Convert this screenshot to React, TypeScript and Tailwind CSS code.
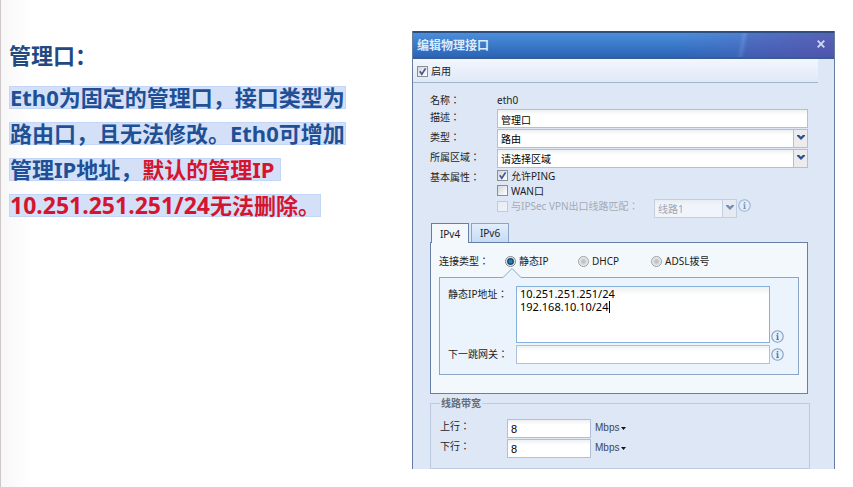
import type { ReactNode } from "react";

const options = { type: ["路由", "透明"], zone: ["请选择区域"], line: ["线路1", "线路2"] };

const fieldStyle =
  "block w-full border border-[#b3bfd6] bg-linear-to-b from-[#eef1f0] via-white via-30% to-white px-[3px] text-black outline-none";

function Chevron() {
  return (
    <svg viewBox="0 0 8 5" className="h-[5px] w-[8px]" fill="#2c4f8f">
      <path d="M0 0h2.2L4 1.8 5.8 0H8v1L4 5 0 1z" />
    </svg>
  );
}

function Info({ dim = false }: { dim?: boolean }) {
  return (
    <svg viewBox="0 0 13 13" className={dim ? "size-[13px] shrink-0 opacity-70" : "size-[13px] shrink-0"}>
      <circle cx="6.5" cy="6.5" r="5.7" fill="#e6f0fa" stroke="#7f9fc6" strokeWidth="1.1" />
      <rect x="5.8" y="3" width="1.5" height="1.5" fill="#4f79b0" />
      <path d="M5.2 5.3h2.1v4h.7v.7H5.2v-.7h.6V6H5.2z" fill="#4f79b0" />
    </svg>
  );
}

function Check({ label, checked, disabled }: { label: string; checked?: boolean; disabled?: boolean }) {
  return (
    <label className={disabled ? "flex items-center gap-[3px] text-[#a3abb8]" : "flex items-center gap-[3px] text-[#1c1c1c]"}>
      <span className="relative block size-[11px] shrink-0">
        <input
          type="checkbox"
          defaultChecked={checked}
          disabled={disabled}
          className="peer block size-[11px] appearance-none border border-[#8b8f94] bg-linear-to-br from-[#d3d6da] to-white disabled:border-[#c3cad4] disabled:from-[#e9edf4] disabled:to-[#eef2f8]"
        />
        <svg viewBox="0 0 11 11" className="pointer-events-none absolute inset-0 hidden size-[11px] peer-checked:block">
          <path d="M2.8 5.2 4.8 8.2 8.6 2.4" fill="none" stroke="#40569c" strokeWidth="1.7" />
        </svg>
      </span>
      {label}
    </label>
  );
}

function Radio({ label, checked }: { label: string; checked?: boolean }) {
  return (
    <label className="flex items-center gap-[3px]">
      <input
        type="radio"
        name="connection"
        defaultChecked={checked}
        className="size-[11px] appearance-none rounded-full border border-[#9b9fa4] bg-radial from-[#bfc2c6] from-20% to-[#f4f5f6] to-75% checked:border-[#7d858e] checked:from-[#1c86b8] checked:via-[#183c5c] checked:via-45% checked:to-[#eef2f5] checked:to-65%"
      />
      {label}
    </label>
  );
}

function Select({ id, items, disabled }: { id: string; items: string[]; disabled?: boolean }) {
  return (
    <div className={disabled ? "relative w-[83px] opacity-60" : "relative flex-1"}>
      <select id={id} disabled={disabled} className={`${fieldStyle} h-[19px] appearance-none pt-[2px] leading-[15px] disabled:text-[#707782]`}>
        {items.map((item) => (
          <option key={item}>{item}</option>
        ))}
      </select>
      <span className="pointer-events-none absolute inset-y-0 right-0 flex w-[15px] items-center justify-center border border-[#b3bfd6] bg-[#ececef] pb-[2px]">
        <Chevron />
      </span>
    </div>
  );
}

function Row({ label, id, children }: { label: string; id?: string; children: ReactNode }) {
  return (
    <div className="flex h-5 items-center">
      <label htmlFor={id} className="w-[67px] shrink-0 pb-[2px]">
        {label}
      </label>
      {children}
    </div>
  );
}

function Rate({ label, id }: { label: string; id: string }) {
  return (
    <div className="flex h-5 items-center">
      <label htmlFor={id} className="w-[67px] pb-1">
        {label}
      </label>
      <div className="w-[84px]">
        <input id={id} defaultValue="8" className={`${fieldStyle} h-[19px] pt-[2px] font-['Liberation_Sans',sans-serif] text-[11px]`} />
      </div>
      <button type="button" className="ml-1 flex items-center gap-[2px] font-['Liberation_Sans',sans-serif] text-[#3c4654]">
        Mbps
        <svg viewBox="0 0 5 3" className="h-[3px] w-[5px]" fill="#111">
          <path d="M0 0h5L2.5 3z" />
        </svg>
      </button>
    </div>
  );
}

function Notes() {
  const line = "h-[23px] border border-[#c3d6f7] bg-[#d3e0f8] leading-[20px] whitespace-pre";
  return (
    <section
      lang="zh-CN"
      className="border-l border-[#cfc8c8] bg-linear-to-r from-[#f7f7f7] to-white to-[30px] pt-[43px] pl-2 font-['Noto_Sans','Noto_Sans_CJK_SC',sans-serif] text-[22px] font-bold text-[#1f5096]"
    >
      <h1 className="leading-[24px] text-[#234a80]">管理口：</h1>
      <div className="mt-[19px] flex flex-col items-start gap-[13px]">
        <p className={line}>Eth0为固定的管理口，接口类型为</p>
        <p className={line}>路由口，且无法修改。Eth0可增加</p>
        <p className={line}>
          管理IP地址，<span className="text-[#d5152f]">默认的管理IP </span>
        </p>
        <p className={`${line} text-[#d5152f]`}>
          <span className="text-[23px]">10.251.251.251/24</span>无法删除。
        </p>
      </div>
    </section>
  );
}

function Dialog() {
  return (
    <section
      lang="zh-TW"
      className="self-start border-x border-[#667c9c] bg-[#dee7f6] font-['Noto_Sans','Noto_Sans_CJK_TC',sans-serif] text-[10px] leading-[14px] text-[#1c1c1c]"
    >
      <header className="flex h-[28px] items-center justify-between border-t-2 border-b-2 border-t-[#2c5180] border-b-[#3a5c92] bg-[linear-gradient(100deg,transparent_62%,#5a62b855_77%,#8c8ed855_78%,#5a55ac77_79%,#5d50a8bb),linear-gradient(#4b8edb,#2a64b6)] pr-[9px] pl-[4px]">
        <h2 className="pt-[2px] text-[12px] font-bold text-[#dcebfb]">编辑物理接口</h2>
        <button type="button" aria-label="关闭" className="pb-[2px]">
          <svg viewBox="0 0 8 8" className="size-[8px]" stroke="#d5d9f2" strokeWidth="1.8">
            <path d="M.7.7 7.3 7.3M7.3.7.7 7.3" />
          </svg>
        </button>
      </header>
      <div className="mr-4 flex h-[24px] items-center border-b border-[#a3b6cd] bg-linear-to-b from-[#f3f6fd] to-[#e0e9f7] pt-[1px] pl-1">
        <Check label="启用" checked />
      </div>

      <form className="pr-[26px] pl-[17px]">
        <div className="flex h-[25px] items-end pb-[1px]">
          <span className="w-[67px]">名称：</span>
          <span>eth0</span>
        </div>
        <Row label="描述：" id="desc">
          <input id="desc" defaultValue="管理口" className={`${fieldStyle} h-[19px] pt-[2px]`} />
        </Row>
        <Row label="类型：" id="type">
          <Select id="type" items={options.type} />
        </Row>
        <Row label="所属区域：" id="zone">
          <Select id="zone" items={options.zone} />
        </Row>
        <div className="flex">
          <span className="w-[67px] shrink-0 pt-[2px]">基本属性：</span>
          <div>
            <div className="flex h-[15px] items-center">
              <Check label="允许PING" checked />
            </div>
            <div className="flex h-[15px] items-center">
              <Check label="WAN口" />
            </div>
            <div className="flex h-[21px] items-start pt-px">
              <div className="w-[157px]">
                <Check label="与IPSec VPN出口线路匹配：" disabled />
              </div>
              <Select id="line" items={options.line} disabled />
              <label htmlFor="line" aria-label="线路" className="ml-[1px]">
                <Info dim />
              </label>
            </div>
          </div>
        </div>

        <div role="tablist" className="mt-[4px] flex gap-[2px] pl-[1px]">
          <button type="button" role="tab" aria-selected="true" className="relative -mb-px h-[20px] w-[38px] border border-b-0 border-[#667fa8] bg-[#f3f8fd]">
            IPv4
          </button>
          <button type="button" role="tab" aria-selected="false" className="h-[19px] w-[38px] border border-b-0 border-[#8aa4cb] bg-linear-to-b from-[#e2eefb] to-[#c6dcf5]">
            IPv6
          </button>
        </div>
        <div role="tabpanel" className="border border-[#667fa8] bg-[#f3f8fd] px-[8px] pb-[18px]">
          <div className="flex h-[34px] items-center pt-[2px]">
            <span className="w-[66px]">连接类型：</span>
            <div className="w-[73px]">
              <Radio label="静态IP" checked />
            </div>
            <div className="w-[73px]">
              <Radio label="DHCP" />
            </div>
            <Radio label="ADSL拨号" />
          </div>
          <div className="relative border border-[#8ea6c6] bg-[#ebf3fc] pt-[8px] pr-[14px] pb-[10px] pl-[8px]">
            <svg viewBox="0 0 20 11" className="absolute -top-[10px] left-[62px] h-[11px] w-[20px]">
              <path d="M0 11V9.5L1 9.5 10 .5 19 9.5H20V11z" fill="#ebf3fc" />
              <path d="M0 9.5H1L10 .5 19 9.5H20" fill="none" stroke="#8ea6c6" />
            </svg>
            <div className="flex">
              <label htmlFor="ips" className="w-[68px] shrink-0 pt-[1px]">
                静态IP地址：
              </label>
              <div className="relative min-w-0 flex-1">
                <textarea
                  id="ips"
                  defaultValue={"10.251.251.251/24\n192.168.10.10/24"}
                  className="block h-[57px] w-full resize-none border border-[#86b1dc] bg-linear-to-b from-[#eef1f0] via-white via-15% to-white px-[3px] text-[11px] leading-[13px] text-black outline-none"
                />
                <span className="absolute top-[15px] left-[93px] h-[12px] w-px bg-black" />
              </div>
              <span className="ml-[1px] self-end">
                <Info />
              </span>
            </div>
            <div className="mt-[2px] flex items-center">
              <label htmlFor="gateway" className="w-[68px] shrink-0 pb-[2px]">
                下一跳网关：
              </label>
              <div className="flex-1">
                <input id="gateway" className={`${fieldStyle} h-[19px]`} />
              </div>
              <span className="ml-[1px]">
                <Info />
              </span>
            </div>
          </div>
        </div>

        <fieldset className="mt-[2px] -mr-[2px] border border-[#bccbe0] pb-[10px] pl-[9px]">
          <legend className="px-[1px] font-bold text-[#666d78]">线路带宽</legend>
          <div className="pt-[8px]">
            <Rate label="上行：" id="up" />
            <Rate label="下行：" id="down" />
          </div>
        </fieldset>
      </form>
    </section>
  );
}

export default function App() {
  return (
    <main className="grid min-h-screen grid-cols-[412fr_423fr] bg-white pr-[18px]">
      <Notes />
      <div className="pt-[31px]">
        <Dialog />
      </div>
    </main>
  );
}
